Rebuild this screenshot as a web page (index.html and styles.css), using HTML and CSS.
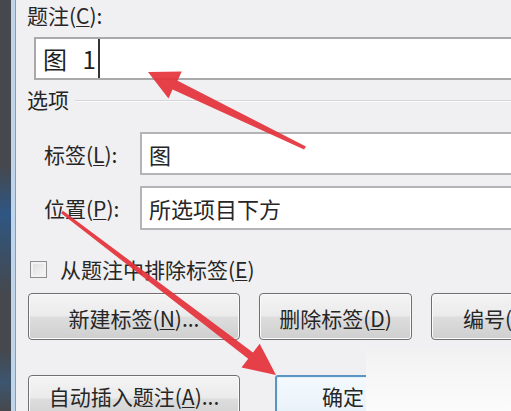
FILE: index.html
```html
<!DOCTYPE html>
<html lang="zh-CN">
<head>
    <meta charset="UTF-8">
    <meta name="viewport" content="width=device-width, initial-scale=1.0">
    <title>题注</title>
    <link rel="stylesheet" href="styles.css">
</head>
<body>
    <div class="screen">
        <div class="side">
            <div class="side-dark"></div>
            <div class="side-light"></div>
            <div class="side-line"></div>
        </div>

        <div class="dialog">
            <div class="caption-label">题注(<u>C</u>):</div>
            <div class="caption-input">
                <span class="caption-text">图 1</span><span class="cursor"></span>
            </div>

            <div class="group-title">
                <span>选项</span>
                <div class="group-line"></div>
            </div>

            <div class="field first">
                <div class="field-label">标签(<u>L</u>):</div>
                <div class="field-box">图</div>
            </div>
            <div class="field second">
                <div class="field-label">位置(<u>P</u>):</div>
                <div class="field-box">所选项目下方</div>
            </div>

            <div class="check-row">
                <span class="checkbox"></span>
                <span>从题注中排除标签(<u>E</u>)</span>
            </div>

            <div class="button-row">
                <div class="btn wide">新建标签(<u>N</u>)...</div>
                <div class="btn mid">删除标签(<u>D</u>)</div>
                <div class="btn mid">编号(<u>U</u>)...</div>
            </div>

            <div class="button-row bottom">
                <div class="btn wide">自动插入题注(<u>A</u>)...</div>
                <div class="btn ok">确定</div>
            </div>
        </div>
    </div>

    <!-- faded patch of the screenshot, bottom right -->
    <div class="patch"></div>

    <!-- red annotation arrows -->
    <svg class="arrows" width="511" height="411" viewBox="0 0 511 411">
        <polygon fill="#e5323a" points="148,72 181.7,71.6 177.6,80.8 305.9,146.4 304.1,149.6 172.6,89.4 168.5,98.6"/>
        <polygon fill="#e5323a" points="276,375 241.5,367.5 248.2,358.8 61.1,213.2 62.9,210.8 253,352.4 259.7,343.7"/>
    </svg>
</body>
</html>
```

FILE: styles.css
```css
body {
    margin: 0;
    width: 511px;
    height: 411px;
    overflow: hidden;
    font-family: "Noto Sans CJK SC", "Microsoft YaHei", sans-serif;
    font-size: 21px;
    color: #262626;
    background-color: #f0eff2;
}
u {
    text-decoration-thickness: 1px;
    text-underline-offset: 2px;
}
.screen {
    display: flex;
    height: 411px;
}

/* left window edge */
.side {
    display: flex;
    flex: none;
}
.side-dark {
    width: 11px;
    background: linear-gradient(to bottom, #45484c 0%, #45484c 40%, #2f5683 52%, #3a4f66 62%, #45484c 72%, #45484c 85%, #3d5570 93%, #45484c 100%);
}
.side-light {
    width: 4px;
    background-color: #bed5ec;
}
.side-line {
    width: 1px;
    background-color: #8c9bab;
}

.dialog {
    flex: 1;
    padding-left: 11px;
    min-width: 0;
}

.caption-label {
    margin-top: 3px;
    height: 24px;
    line-height: 24px;
}
.caption-input {
    margin-top: 10px;
    margin-left: 7px;
    height: 39px;
    border: 2px solid #a9a9a9;
    border-right: none;
    background-color: #fff;
    display: flex;
    align-items: stretch;
}
.caption-text {
    padding-left: 7px;
    font-size: 24px;
    line-height: 39px;
    color: #1e1e1e;
    word-spacing: 10px;
}
.cursor {
    width: 2px;
    margin-left: 2px;
    background-color: #333;
}

.group-title {
    margin-top: 6px;
    height: 26px;
    line-height: 26px;
    display: flex;
    align-items: center;
}
.group-line {
    flex: 1;
    margin-left: 6px;
    margin-top: 4px;
    height: 1px;
    background-color: #d6d6d8;
    border-bottom: 1px solid #fbfbfb;
}

.field {
    display: flex;
    align-items: center;
}
.field.first {
    margin-top: 20px;
    height: 43px;
}
.field.second {
    margin-top: 11px;
    height: 44px;
}
.field-label {
    width: 96px;
    padding-left: 17px;
    flex: none;
}
.field-box {
    flex: 1;
    align-self: stretch;
    display: flex;
    align-items: center;
    padding-left: 7px;
    font-size: 22px;
    background-color: #fff;
    border: 2px solid #b4b4b6;
    border-right: none;
}

.check-row {
    margin-top: 26px;
    height: 26px;
    line-height: 26px;
    display: flex;
    align-items: center;
}
.checkbox {
    width: 15px;
    height: 15px;
    margin-left: 3px;
    margin-right: 13px;
    border: 1px solid #8e8f8f;
    background: linear-gradient(135deg, #dcdcdc, #f8f8f8);
    box-shadow: inset 0 0 0 2px #f2f2f2;
}

.button-row {
    margin-top: 11px;
    display: flex;
    gap: 19px;
    margin-left: 1px;
}
.button-row.bottom {
    margin-top: 35px;
    gap: 35px;
}
.btn {
    flex: none;
    display: flex;
    align-items: center;
    justify-content: center;
    padding-top: 3px;
    box-sizing: border-box;
    height: 47px;
    border: 1px solid #707070;
    border-radius: 4px;
    background: linear-gradient(to bottom, #f4f4f4 0%, #ebebeb 48%, #dddddd 52%, #cfcfcf 100%);
    box-shadow: inset 0 0 0 1px #fbfbfb;
}
.button-row.bottom .btn {
    padding-top: 0;
    padding-bottom: 6px;
}
.btn.wide {
    width: 212px;
}
.btn.mid {
    width: 153px;
}
.btn.ok {
    width: 136px;
    border: 2px solid #5d95c2;
    border-radius: 3px;
    background: linear-gradient(to bottom, #f3f9fd 0%, #eef6fb 50%, #e4eef5 100%);
    box-shadow: inset 0 0 0 1px #def2fc;
}

.patch {
    position: absolute;
    left: 366px;
    top: 348px;
    width: 145px;
    height: 63px;
    background: linear-gradient(to bottom, #f1f1f2, #f8f8f8 60%, #fbfbfb);
}
.arrows {
    position: absolute;
    left: 0;
    top: 0;
    opacity: 0.92;
}
```
